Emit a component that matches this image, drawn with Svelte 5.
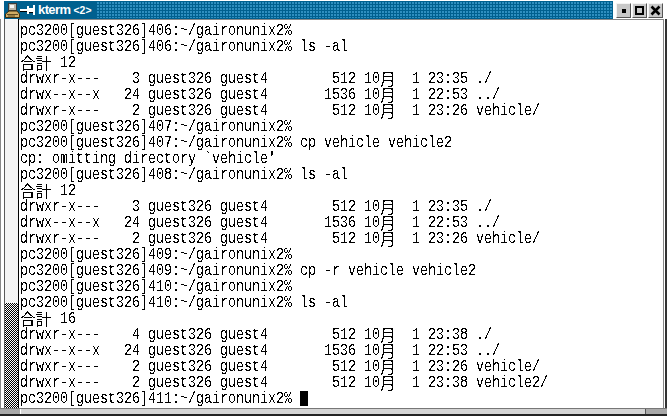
<script>
  const P = 'pc3200[guest326]';
  const H = ':~/gaironunix2%';
  const rows12 = [
    'drwxr-x---    3 guest326 guest4        512 10月  1 23:35 ./',
    'drwx--x--x   24 guest326 guest4       1536 10月  1 22:53 ../',
    'drwxr-x---    2 guest326 guest4        512 10月  1 23:26 vehicle/'
  ];
  const lines = [
    `${P}406${H}`,
    `${P}406${H} ls -al`,
    '合計 12',
    ...rows12,
    `${P}407${H}`,
    `${P}407${H} cp vehicle vehicle2`,
    "cp: omitting directory `vehicle'",
    `${P}408${H} ls -al`,
    '合計 12',
    ...rows12,
    `${P}409${H}`,
    `${P}409${H} cp -r vehicle vehicle2`,
    `${P}410${H}`,
    `${P}410${H} ls -al`,
    '合計 16',
    'drwxr-x---    4 guest326 guest4        512 10月  1 23:38 ./',
    'drwx--x--x   24 guest326 guest4       1536 10月  1 22:53 ../',
    'drwxr-x---    2 guest326 guest4        512 10月  1 23:26 vehicle/',
    'drwxr-x---    2 guest326 guest4        512 10月  1 23:38 vehicle2/'
  ];
  const parts = (s) => s.split(/([合計月]+)/).filter(Boolean).map((t) => ({ t, cjk: /[合計月]/.test(t) }));
</script>

<svg class="defs" width="0" height="0" aria-hidden="true">
  <filter id="mono" color-interpolation-filters="sRGB" x="0" y="0" width="100%" height="100%">
    <feComponentTransfer>
      <feFuncR type="discrete" tableValues="0 0 1 1" />
      <feFuncG type="discrete" tableValues="0 0 1 1" />
      <feFuncB type="discrete" tableValues="0 0 1 1" />
    </feComponentTransfer>
  </filter>
</svg>

<div class="window">
  <header class="titlebar">
    <div class="bar">
      <svg class="app-icon" width="15" height="17" viewBox="0 0 15 17">
        <rect x="3.5" y="1.5" width="8" height="7" fill="#b8b4a8" stroke="#3a3a3a" />
        <rect x="5" y="3" width="4" height="3" fill="#f4f4f4" />
        <path d="M0.5 12 L4 9 L12 9 L14.5 12 L14.5 15.5 L0.5 15.5 Z" fill="#d0ac64" stroke="#3c2e10" />
        <path d="M2 12.5 L13 12.5 M3 14 L10 14" stroke="#5c4a20" />
      </svg>
      <svg class="pin" width="15" height="10" viewBox="0 0 15 10">
        <rect x="0" y="4" width="7" height="2" fill="#fff" />
        <rect x="7" y="1" width="2" height="8" fill="#fff" />
        <rect x="9" y="3" width="4" height="4" fill="#fff" />
        <rect x="13" y="0" width="2" height="10" fill="#fff" />
        <rect x="0" y="6" width="7" height="1" fill="#000" />
        <rect x="9" y="7" width="4" height="1" fill="#000" />
      </svg>
      <span class="title">kterm <small>&lt;2&gt;</small></span>
      <div class="dots"></div>
    </div>
    <div class="buttons">
      <div class="btn"><i class="min"></i></div>
      <div class="btn"><i class="max"></i></div>
      <div class="btn">
        <svg width="11" height="11" viewBox="0 0 11 11"><path d="M1.5 1.5 L9.5 9.5 M9.5 1.5 L1.5 9.5" stroke="#000" stroke-width="2.6" /></svg>
      </div>
    </div>
  </header>

  <div class="middle">
    <div class="scrollbar"><div class="thumb"></div></div>
    <div class="client">
      <div class="term">
        {#each lines as line}
          <div class="line">{#each parts(line) as p}{#if p.cjk}{#each [...p.t] as c}<span class="cjk"><b>{c}</b></span>{/each}{:else}{p.t}{/if}{/each}</div>
        {/each}
        <div class="line">{P}411{H} <span class="cursor"></span></div>
      </div>
    </div>
  </div>

  <footer class="bottom">
    <div class="seg corner"></div>
    <div class="seg long"></div>
    <div class="seg corner end"></div>
  </footer>
</div>

<style>
  :global(body) {
    margin: 0;
    background: #fff;
  }
  .defs {
    position: absolute;
  }
  .window {
    width: 667px;
    height: 416px;
    display: flex;
    flex-direction: column;
    overflow: hidden;
    background: #fff;
  }
  .titlebar {
    height: 19px;
    display: flex;
    flex: none;
  }
  .bar {
    flex: 1;
    display: flex;
    align-items: center;
    background: #00608f;
    margin-left: 4px;
    padding-left: 1px;
    border-top: 1px solid #fff;
  }
  .app-icon {
    flex: none;
  }
  .pin {
    flex: none;
  }
  .title {
    margin-left: 3px;
    font: bold 13px/17px "Liberation Sans", sans-serif;
    letter-spacing: -0.6px;
    color: #fff;
    white-space: pre;
  }
  .title small {
    font-size: 10.5px;
    font-weight: bold;
    letter-spacing: 0;
  }
  .dots {
    flex: 1;
    align-self: stretch;
    margin: 1px 0 1px 5px;
    background-color: #00608f;
    background-image: radial-gradient(circle at 1px 1px, #2f8fc0 0.9px, transparent 1px);
    background-size: 3px 3px;
  }
  .buttons {
    display: flex;
    flex: none;
    gap: 1px;
    padding: 3px 4px 0 3px;
    background: #fff;
    box-sizing: border-box;
    width: 54px;
  }
  .btn {
    width: 15px;
    height: 15px;
    box-sizing: border-box;
    display: flex;
    align-items: center;
    justify-content: center;
    background: #c8c8c8;
    border: 1px solid;
    border-color: #f4f4f4 #555 #555 #f4f4f4;
  }
  .min {
    width: 4px;
    height: 4px;
    background: #000;
  }
  .max {
    width: 5px;
    height: 5px;
    border: 2px solid #000;
  }
  .middle {
    flex: 1;
    display: flex;
    min-height: 0;
    border-left: 1px solid #888;
    border-right: 2px solid #333;
  }
  .scrollbar {
    margin-left: 3px;
    flex: none;
    display: flex;
    flex-direction: column;
    justify-content: flex-end;
    border-left: 1px solid #5a5a5a;
    border-right: 1px solid #000;
    box-sizing: border-box;
    width: 15px;
    background: #f4f4f4;
  }
  .thumb {
    height: 105px;
    background-image: conic-gradient(#000 25%, #fff 0 50%, #000 0 75%, #fff 0);
    background-size: 2px 2px;
  }
  .client {
    flex: 1;
    min-width: 0;
    overflow: hidden;
    background: #fff;
    border-top: 1px solid #888;
    border-right: 1px solid #888;
    margin-right: 1px;
  }
  .term {
    padding: 3px 0 0 1px;
    filter: url(#mono);
    background: #fff;
  }
  .line {
    height: 16px;
    font: 17px/16px "Liberation Mono", monospace;
    color: #000;
    white-space: pre;
    transform: scaleX(0.7843);
    transform-origin: 0 0;
  }
  .cjk {
    display: inline-block;
    width: 20.4px;
    height: 16px;
    margin-top: -1px;
    vertical-align: top;
    transform: scaleX(1.275);
    transform-origin: 0 0;
  }
  .cjk b {
    font: 400 15.5px/16px "Noto Sans CJK JP", sans-serif;
  }
  .cursor {
    display: inline-block;
    width: 10.2px;
    height: 15px;
    background: #000;
    vertical-align: top;
  }
  .bottom {
    height: 8px;
    flex: none;
    display: flex;
    box-sizing: border-box;
    border-top: 1px solid #777;
    border-bottom: 2px solid #222;
  }
  .seg {
    background: #d4d4d4;
  }
  .corner {
    width: 20px;
    background: #a8a8a8;
    border-right: 1px solid #fff;
  }
  .long {
    flex: 1;
  }
  .end {
    width: 21px;
    border-right: none;
    border-left: 1px solid #555;
  }
</style>
